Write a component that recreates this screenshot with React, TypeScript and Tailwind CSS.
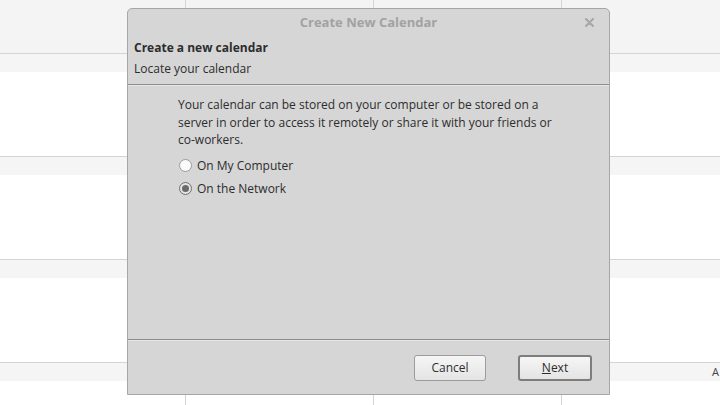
import React from "react";

const rows = [0, 1, 2, 3];
const cols = [0, 1, 2, 3];

const Radio = ({ checked }: { checked?: boolean }) => (
  <span
    className={`flex h-[13px] w-[13px] items-center justify-center rounded-full border ${
      checked ? "border-[#6e6e6e] bg-[#e4e4e4]" : "border-[#9a9a9a] bg-[#fafafa]"
    }`}
  >
    {checked && <span className="h-[7px] w-[7px] rounded-full bg-[#6a6a6a]" />}
  </span>
);

const App: React.FC = () => {
  return (
    <div
      className="relative h-[405px] w-[720px] overflow-hidden bg-white text-[#333]"
      style={{ fontFamily: "'Open Sans', 'Noto Sans', sans-serif" }}
    >
      {/* calendar behind */}
      <div className="flex h-full flex-col">
        <div className="flex h-[53px] shrink-0 bg-[#f4f4f4]">
          {cols.map((c) => (
            <div
              key={c}
              className={`h-full shrink-0 ${c === 0 ? "w-[185px]" : "w-[188px] border-l border-[#d4d4d4]"}`}
            />
          ))}
        </div>
        {rows.map((r) => (
          <div key={r} className="flex h-[103px] shrink-0 flex-col border-t border-[#d4d4d4]">
            <div className="flex h-[18px] shrink-0 items-center justify-end bg-[#f5f5f5] pr-[1px] text-[11px] text-[#444]">
              {r === 3 && "A"}
            </div>
            <div className="flex flex-1">
              {cols.map((c) => (
                <div
                  key={c}
                  className={`h-full shrink-0 ${c === 0 ? "w-[185px]" : "w-[188px] border-l border-[#d4d4d4]"}`}
                />
              ))}
            </div>
          </div>
        ))}
      </div>

      {/* dialog */}
      <div className="absolute left-[127px] top-[8px] flex h-[387px] w-[483px] flex-col rounded-t-[5px] border border-[#a6a6a6] bg-[#d6d6d6]">
        <div className="relative flex h-[28px] items-center justify-center text-[13px] font-bold text-[#a2a2a2]">
          Create New Calendar
          <svg className="absolute right-[15px] top-[9px]" width="9" height="9" viewBox="0 0 9 9">
            <path d="M1 1L8 8M8 1L1 8" stroke="#a8a8a8" strokeWidth="2.2" strokeLinecap="round" />
          </svg>
        </div>
        <div className="px-[6px] text-[12px] leading-[21px] text-[#2d2d2d]">
          <div className="font-bold">Create a new calendar</div>
          <div>Locate your calendar</div>
        </div>
        <div className="mt-[5px] border-t border-[#8e8e8e] border-b border-b-[#e6e6e6]" />
        <div className="flex-1 pl-[50px] pr-[20px] pt-[10px] text-[12px] text-[#2d2d2d]">
          <p className="w-[380px] leading-[17.5px]">
            Your calendar can be stored on your computer or be stored on a server in order to access
            it remotely or share it with your friends or co-workers.
          </p>
          <div className="mt-[8px] flex flex-col gap-[6px] pl-[1px]">
            <label className="flex items-center gap-[5px] leading-[17px]">
              <Radio />
              On My Computer
            </label>
            <label className="flex items-center gap-[5px] leading-[17px]">
              <Radio checked />
              On the Network
            </label>
          </div>
        </div>
        <div className="border-t border-[#8e8e8e] border-b border-b-[#e6e6e6]" />
        <div className="flex h-[53px] items-center justify-end gap-[32px] pr-[17px] text-[12px] text-[#2d2d2d]">
          <button className="h-[26px] w-[72px] rounded-[3px] border border-[#9c9c9c] bg-gradient-to-b from-[#f6f6f6] to-[#e4e4e4]">
            Cancel
          </button>
          <button className="h-[26px] w-[74px] rounded-[3px] border-2 border-[#7d7d7d] bg-gradient-to-b from-[#f6f6f6] to-[#e4e4e4]">
            <span className="underline">N</span>ext
          </button>
        </div>
      </div>
    </div>
  );
};

export default App;
